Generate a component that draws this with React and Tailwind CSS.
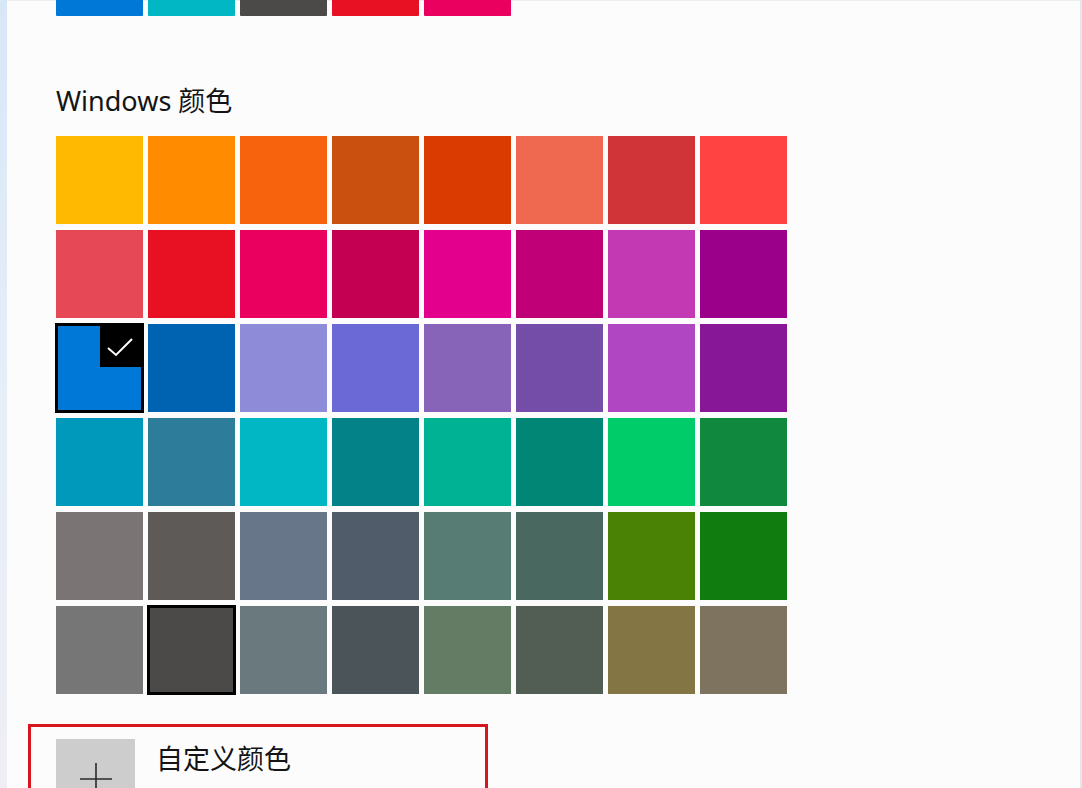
import React from "react";

const recent = ["#0078D7", "#00B7C3", "#4C4A48", "#E81123", "#EA005E"];

const rows = [
  ["#FFB900", "#FF8C00", "#F7630C", "#CA5010", "#DA3B01", "#EF6950", "#D13438", "#FF4343"],
  ["#E74856", "#E81123", "#EA005E", "#C30052", "#E3008C", "#BF0077", "#C239B3", "#9A0089"],
  ["#0078D7", "#0063B1", "#8E8CD8", "#6B69D6", "#8764B8", "#744DA9", "#B146C2", "#881798"],
  ["#0099BC", "#2D7D9A", "#00B7C3", "#038387", "#00B294", "#018574", "#00CC6A", "#10893E"],
  ["#7A7574", "#5D5A58", "#68768A", "#515C6B", "#567C73", "#486860", "#498205", "#107C10"],
  ["#767676", "#4C4A48", "#69797E", "#4A5459", "#647C64", "#525E54", "#847545", "#7E735F"],
];

function Tile({ color, checked, outlined }) {
  return (
    <div className="relative w-[87px] h-[88px]" style={{ backgroundColor: color }}>
      {(checked || outlined) && (
        <div className="absolute inset-[-1px] border-[3px] border-black" />
      )}
      {checked && (
        <div className="absolute top-[-1px] right-[-1px] w-[44px] h-[44px] bg-black flex items-center justify-center">
          <svg width="44" height="44" viewBox="0 0 44 44">
            <path d="M8 25 L16 32 L32 16" fill="none" stroke="#fff" strokeWidth="2" />
          </svg>
        </div>
      )}
    </div>
  );
}

export default function App() {
  return (
    <div
      className="w-[1082px] h-[788px] overflow-hidden bg-[#fcfcfd] flex"
      style={{ fontFamily: '"Noto Sans", "Noto Sans CJK SC", sans-serif' }}
    >
      <div className="w-[7px] h-full bg-gradient-to-b from-[#d8e7f6] via-[#e6eef8] to-[#efeef4]" />
      <div className="flex-1 flex flex-col pl-[49px] border-t border-[#eceef0]">
        <div className="flex gap-[5px] mt-[-72px]">
          {recent.map((c, i) => (
            <div key={i} className="w-[87px] h-[87px] rounded-[1px]" style={{ backgroundColor: c }} />
          ))}
        </div>
        <div className="mt-[68px] h-[34px] leading-[34px] text-[27px] text-[#141414]">
          Windows 颜色
        </div>
        <div className="mt-[18px] flex flex-col gap-[6px]">
          {rows.map((row, r) => (
            <div key={r} className="flex gap-[5px]">
              {row.map((c, i) => (
                <Tile
                  key={i}
                  color={c}
                  checked={r === 2 && i === 0}
                  outlined={r === 5 && i === 1}
                />
              ))}
            </div>
          ))}
        </div>
        <div className="mt-[30px] ml-[-28px] w-[460px] h-[120px] border-[3px] border-[#d7151f] pl-[25px] pt-[12px] flex items-start gap-[21px]">
          <div className="w-[79px] h-[79px] bg-[#cdcdcd] flex items-center justify-center">
            <svg width="34" height="34" viewBox="0 0 34 34">
              <path d="M1 17 H33 M17 1 V33" stroke="#2a2a2a" strokeWidth="1.6" fill="none" />
            </svg>
          </div>
          <div className="mt-[3px] text-[27px] leading-[34px] text-[#141414]">自定义颜色</div>
        </div>
      </div>
      <div className="w-[2px] h-full bg-[#e4e6e8]" />
    </div>
  );
}
